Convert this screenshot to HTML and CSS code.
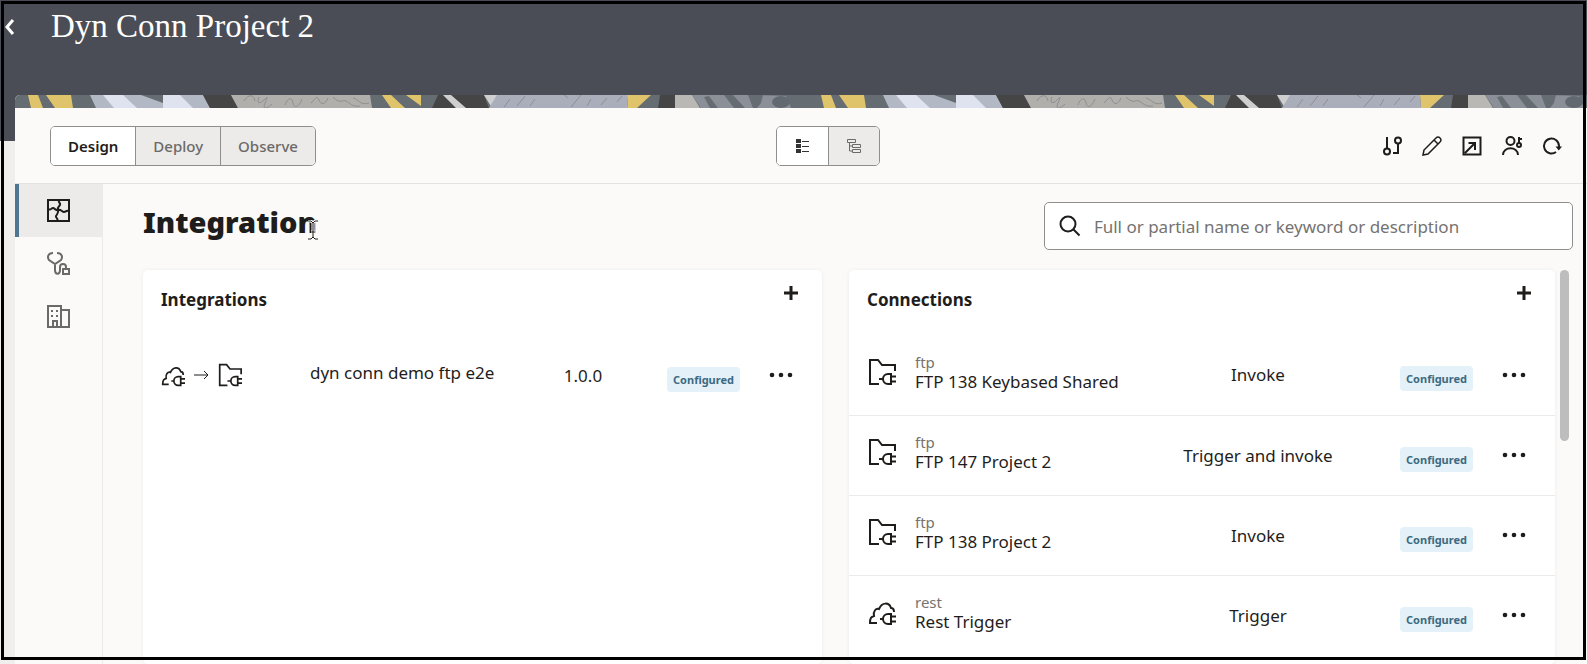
FILE: index.html
```
<!DOCTYPE html>
<html lang="en">
<head>
  <meta charset="UTF-8">
  <title>Dyn Conn Project 2</title>
  <link rel="stylesheet" href="styles.css">
</head>
<body>
  <!-- shared icons -->
  <svg class="defs" width="0" height="0" aria-hidden="true">
    <symbol id="folder-plug" viewBox="0 0 28 28">
      <path d="M11 26H2V2h8l4 5h13v6"/>
      <path d="M11 21h4M23 16h-3a5 5 0 0 0 0 10h3zM23 18.500h5M23 23.500h5"/>
    </symbol>
    <symbol id="cloud-plug" viewBox="0 0 28 28">
      <path d="M9 25H2c0-5 1-6 4-7-1-5 2-8 5-7 3-7 10-7 12-1 2 0 3 2 3 4"/>
      <path d="M12 21h3M23 16h-3a5 5 0 0 0 0 10h3zM23 18.500h5M23 23.500h5"/>
    </symbol>
    <symbol id="plus" viewBox="0 0 14 14">
      <path d="M7 0v14M0 7h14"/>
    </symbol>
    <symbol id="dots" viewBox="0 0 24 6">
      <circle cx="3" cy="3" r="2.300"/><circle cx="12" cy="3" r="2.300"/><circle cx="21" cy="3" r="2.300"/>
    </symbol>
  </svg>

  <header class="header">
    <button class="back" aria-label="Back">
      <svg width="10" height="16" viewBox="0 0 10 16"><path d="M8 1L2 8l6 7"/></svg>
    </button>
    <h1>Dyn Conn Project 2</h1>
  </header>

  <main class="page">
    <svg class="banner" width="100%" height="13" aria-hidden="true">
      <pattern id="strip" width="793" height="13" patternUnits="userSpaceOnUse">
        <rect width="793" height="13" fill="#666d72"/>
        <path fill="#dfc46c" d="M13 0h10l5 13H16zM31 0h25l2 13H40zM367 0h9l14 13h-14zM391 0h15v11zM612 0h24l-14 13h-9z"/>
        <path fill="#b3b8c5" d="M75 0h113l7 13H81z"/>
        <path fill="#dfe3ef" d="M88 0h20l14 13H99zM148 0h17l13 13h-30z"/>
        <path fill="#666d72" d="M126 0h22v8z"/>
        <path fill="#454545" d="M188 0h28l7 13h-28zM423 0h46l5 13h-57zM645 0h15v13h-17z"/>
        <path fill="#b0afac" d="M216 0h139l2 13H223z"/>
        <path class="scribble" d="M229 6c4-7 10-7 11 0M244 2c-3 7 1 7 5 3s4-4 1 3 2 6 7 1M270 10c3-8 7-8 8-2s6 4 9-4M296 8c5-5 6-8 8-3s6 5 9-2M318 2c8 8 9 2 13 4s6 6 14 5M338 3c5 1 8 8 16 5"/>
        <path fill="#cfcfd0" d="M428 0h8l15 13h-10zM469 0h17l-9 13z"/>
        <path fill="#a9aeba" d="M482 0h130l1 13H474z"/>
        <path class="scribble" d="M489 12l6-8M502 11l8-10M515 11l5-7M549 0l4 3M556 12l10-12M572 11l4-7M586 10l6-7M602 7l5-6"/>
        <path fill="#b9b8b5" d="M660 0h17l8 13h-25z"/>
        <path fill="#8b9098" d="M677 0h62l32 1 5 12h-90z"/>
        <path fill="#666d72" d="M689 2l5-1 9 12h-8zM709 0h9l12 13h-11zM733 0h15l-2 8-4 5h-4z"/>
        <ellipse cx="766" cy="7" rx="9" ry="6" fill="#626970"/>
      </pattern>
      <rect width="100%" height="13" fill="url(#strip)"/>
    </svg>

    <div class="toolbar">
      <div class="segmented">
        <button class="active">Design</button>
        <button>Deploy</button>
        <button>Observe</button>
      </div>
      <div class="segmented views">
        <button class="active" aria-label="List view">
          <svg width="14" height="14" viewBox="0 0 14 14">
            <path d="M0 0h5v4H0zM0 5h5v4H0zM0 10h5v4H0z" fill="#333" stroke="none"/>
            <path d="M6 2.500h7M6 7.500h7M6 12.500h7"/>
          </svg>
        </button>
        <button aria-label="Tree view">
          <svg width="16" height="16" viewBox="0 0 16 16">
            <path d="M1.500 1.500h8v3h-8zM6.500 6.500h8v3h-8zM6.500 11.500h8v3h-8zM3.500 5v8h3M3.500 8h3"/>
          </svg>
        </button>
      </div>
      <div class="actions">
        <button aria-label="Branches">
          <svg width="20" height="20" viewBox="0 0 20 20">
            <circle cx="5" cy="15.500" r="3"/><circle cx="16" cy="4.500" r="3"/><path d="M5 1v11M16 8v9h-5"/>
          </svg>
        </button>
        <button aria-label="Edit">
          <svg class="pencil" width="20" height="20" viewBox="0 0 20 20">
            <path d="M1 19l1-5L14 2q2-2 4 0t0 4L6 18zM12 4l4 4"/>
          </svg>
        </button>
        <button aria-label="Open">
          <svg width="20" height="20" viewBox="0 0 20 20">
            <path d="M1.500 1.500h17v17h-17zM3 17L13 7M6.500 7H13v7"/>
          </svg>
        </button>
        <button aria-label="Share">
          <svg width="20" height="20" viewBox="0 0 20 20">
            <circle cx="8.500" cy="5" r="4"/><path d="M1 19c0-9 15-9 15 0M17 1v6M17 3h3"/><circle cx="17" cy="9" r="2"/>
          </svg>
        </button>
        <button aria-label="Refresh">
          <svg width="20" height="20" viewBox="0 0 20 20">
            <path d="M14 16a7.500 7.500 0 1 1 3-6v3"/><path d="M13.500 10.500h6.500l-3.200 4z" fill="#1f1d1b" stroke="none"/>
          </svg>
        </button>
      </div>
    </div>

    <div class="body">
      <nav class="sidebar">
        <a href="#" class="active" aria-label="Integration">
          <svg width="23" height="23" viewBox="0 0 23 23">
            <path d="M1 1h21v21H1z"/>
            <path d="M12 1c-1 3 2 3 1 5s-3 2-2 5M22 12c-3-1-3 1-5 1s-3-3-6-2M10 22c2-3-2-3-1-5s3-3 2-6M1 10c3 2 3-1 5-1s2 3 5 2"/>
          </svg>
        </a>
        <a href="#" aria-label="Health">
          <svg width="23" height="23" viewBox="0 0 23 23">
            <path d="M6 1C1 1 0 5 2 8l6 4 6-4c2-3 1-7-4-7M8 12v6c0 5 5 5 5 0v-3c0-4 6-4 6 0v2M16 17h6v5h-6z"/>
          </svg>
        </a>
        <a href="#" aria-label="Organization">
          <svg width="23" height="23" viewBox="0 0 23 23">
            <path d="M1 1h13v21H1zM14 5h8v17h-8M6 22v-6h4v6"/>
            <path d="M4 6h2M9 6h2M4 11h2M9 11h2"/>
          </svg>
        </a>
      </nav>

      <section class="content">
        <div class="content-head">
          <h2>Integration
            <svg class="ibeam" width="12" height="20" viewBox="0 0 12 20" aria-hidden="true">
              <path class="halo" d="M1 1h3l2 2 2-2h3M6 3v14M1 19h3l2-2 2 2h3M4 12h4"/>
              <path d="M1 1h3l2 2 2-2h3M6 3v14M1 19h3l2-2 2 2h3M4 12h4"/>
            </svg>
          </h2>
          <label class="search">
            <svg width="22" height="22" viewBox="0 0 22 22"><circle cx="9" cy="9" r="7.500"/><path d="M14.500 14.500l6 6"/></svg>
            <input type="text" aria-label="Search" placeholder="Full or partial name or keyword or description">
          </label>
        </div>

        <div class="scroller">
          <div class="panels">
            <section class="panel">
              <div class="panel-head">
                <h3>Integrations</h3>
                <button aria-label="Add integration"><svg class="plus"><use href="#plus"/></svg></button>
              </div>
              <table class="integrations">
                <tr>
                  <td class="flow">
                    <div>
                      <svg class="icon small"><use href="#cloud-plug"/></svg>
                      <svg class="arrow" width="15" height="10" viewBox="0 0 15 10"><path d="M0 5h14M10 1l4 4-4 4"/></svg>
                      <svg class="icon small"><use href="#folder-plug"/></svg>
                    </div>
                  </td>
                  <td class="name">dyn conn demo ftp e2e</td>
                  <td class="type">1.0.0</td>
                  <td class="status"><span class="badge">Configured</span></td>
                  <td class="menu"><button aria-label="Actions"><svg class="dots"><use href="#dots"/></svg></button></td>
                </tr>
              </table>
            </section>

            <section class="panel">
              <div class="panel-head">
                <h3>Connections</h3>
                <button aria-label="Add connection"><svg class="plus"><use href="#plus"/></svg></button>
              </div>
              <table class="connections">
                <tr>
                  <td class="kind"><svg class="icon"><use href="#folder-plug"/></svg></td>
                  <td class="name"><small>ftp</small>FTP 138 Keybased Shared</td>
                  <td class="type">Invoke</td>
                  <td class="status"><span class="badge">Configured</span></td>
                  <td class="menu"><button aria-label="Actions"><svg class="dots"><use href="#dots"/></svg></button></td>
                </tr>
                <tr>
                  <td class="kind"><svg class="icon"><use href="#folder-plug"/></svg></td>
                  <td class="name"><small>ftp</small>FTP 147 Project 2</td>
                  <td class="type">Trigger and invoke</td>
                  <td class="status"><span class="badge">Configured</span></td>
                  <td class="menu"><button aria-label="Actions"><svg class="dots"><use href="#dots"/></svg></button></td>
                </tr>
                <tr>
                  <td class="kind"><svg class="icon"><use href="#folder-plug"/></svg></td>
                  <td class="name"><small>ftp</small>FTP 138 Project 2</td>
                  <td class="type">Invoke</td>
                  <td class="status"><span class="badge">Configured</span></td>
                  <td class="menu"><button aria-label="Actions"><svg class="dots"><use href="#dots"/></svg></button></td>
                </tr>
                <tr>
                  <td class="kind"><svg class="icon"><use href="#cloud-plug"/></svg></td>
                  <td class="name"><small>rest</small>Rest Trigger</td>
                  <td class="type">Trigger</td>
                  <td class="status"><span class="badge">Configured</span></td>
                  <td class="menu"><button aria-label="Actions"><svg class="dots"><use href="#dots"/></svg></button></td>
                </tr>
              </table>
            </section>
          </div>
          <div class="scrollbar"></div>
        </div>
      </section>
    </div>
  </main>
  <div class="frame"></div>
</body>
</html>
```
FILE: styles.css
```
* {
  box-sizing: border-box;
}

body {
  margin: 0;
  height: 100vh;
  overflow: hidden;
  display: flex;
  flex-direction: column;
  background: linear-gradient(#4a4d55 141px, #f0efee 141px);
  color: #1f1d1b;
  font-family: "Noto Sans", "Open Sans", sans-serif;
  font-size: 17px;
}

h1, h2, h3 {
  margin: 0;
}

button {
  padding: 0;
  border: none;
  background: none;
  color: inherit;
  font: inherit;
  cursor: pointer;
}

svg {
  display: block;
  fill: none;
  stroke: #1f1d1b;
  stroke-width: 2;
}

.defs {
  position: absolute;
}

/* black outline round the whole window */
.frame {
  position: absolute;
  top: 1px;
  left: 1px;
  right: 1px;
  bottom: 4px;
  border: 3px solid #000;
  pointer-events: none;
}

/* header */
.header {
  display: flex;
  align-items: center;
  gap: 36px;
  height: 95px;
  padding: 2px 5px 44px;
  color: #fff;
}

.back svg {
  stroke: #fff;
  stroke-width: 3;
}

h1 {
  font-family: Georgia, "Liberation Serif", serif;
  font-size: 33px;
  font-weight: normal;
}

.page {
  flex: 1;
  min-height: 0;
  display: flex;
  flex-direction: column;
  margin-left: 15px;
  background: #fbfaf8;
  border-top-left-radius: 5px;
  overflow: hidden;
}

.banner {
  flex: none;
}

.banner path, .banner rect, .banner ellipse {
  stroke: none;
}

.banner .scribble {
  stroke: #8d8e91;
  stroke-width: 1;
}

/* toolbar */
.toolbar {
  display: grid;
  grid-template-columns: 1.05fr auto 1fr;
  align-items: center;
  height: 76px;
  padding: 0 15px 0 35px;
  border-bottom: 1px solid #e4e3e1;
}

.segmented {
  display: flex;
  justify-self: start;
  border: 1px solid #8f8e8c;
  border-radius: 5px;
  overflow: hidden;
}

.segmented button {
  height: 38px;
  padding: 0 17px;
  background: #ecebea;
  color: #6b6a68;
  font-size: 15px;
  font-weight: 500;
}

.segmented button + button {
  border-left: 1px solid #8f8e8c;
}

.segmented .active {
  background: #fff;
  color: #1f1d1b;
  font-weight: 600;
}

.views button {
  width: 51px;
  display: flex;
  align-items: center;
  justify-content: center;
}

.views svg {
  stroke: #6b6a68;
  stroke-width: 1;
}

.views .active svg {
  stroke: #333;
}

.actions {
  display: flex;
  justify-self: end;
}

.actions button {
  width: 40px;
  height: 40px;
  display: flex;
  align-items: center;
  justify-content: center;
}

.actions .pencil {
  stroke-width: 1.5;
}

/* sidebar */
.body {
  flex: 1;
  min-height: 0;
  display: flex;
}

.sidebar {
  width: 88px;
  border-right: 1px solid #ebeae8;
}

.sidebar a {
  display: flex;
  align-items: center;
  justify-content: center;
  height: 53px;
  padding-right: 5px;
  border-left: 4px solid transparent;
}

.sidebar svg {
  stroke: #6b6a68;
}

.sidebar .active {
  background: #ecebea;
  border-left-color: #4d7690;
}

.sidebar .active svg {
  stroke: #1f1d1b;
}

/* content */
.content {
  flex: 1;
  min-width: 0;
  display: flex;
  flex-direction: column;
  padding: 18px 14px 0 40px;
}

.content-head {
  display: flex;
  align-items: start;
  justify-content: space-between;
}

h2 {
  position: relative;
  font-size: 29px;
  font-weight: 900;
  line-height: 40px;
}

.ibeam {
  position: absolute;
  right: -2px;
  bottom: 2px;
  stroke-width: 1;
}

.ibeam .halo {
  stroke: #fff;
  stroke-width: 3;
}

.search {
  display: flex;
  align-items: center;
  gap: 11px;
  width: 37%;
  height: 48px;
  padding: 0 14px;
  border: 1px solid #8f8e8c;
  border-radius: 5px;
  background: #fff;
}

.search input {
  flex: 1;
  border: none;
  outline: none;
  background: none;
  font: inherit;
  color: inherit;
}

.search input::placeholder {
  color: #757371;
}

.scroller {
  flex: 1;
  min-height: 0;
  display: flex;
  gap: 5px;
  padding: 20px 4px 0 0;
}

.scrollbar {
  width: 9px;
  height: 171px;
  border-radius: 5px;
  background: #bdbdbd;
}

.panels {
  flex: 1;
  display: grid;
  grid-template-columns: 679fr 706fr;
  gap: 27px;
}

.panel {
  background: #fff;
  border-radius: 5px;
  box-shadow: 0 0 4px rgba(0, 0, 0, 0.06);
}

.panel-head {
  display: flex;
  align-items: center;
  justify-content: space-between;
  height: 65px;
  padding: 0 24px 6px 18px;
}

h3 {
  font-size: 17px;
  font-weight: 700;
}

.panel-head button {
  padding-bottom: 14px;
}

.plus {
  width: 14px;
  height: 14px;
  stroke-width: 3;
}

/* rows */
table {
  width: 100%;
  table-layout: fixed;
  border-collapse: collapse;
}

td {
  height: 80px;
  padding: 0;
}

.connections tr + tr td {
  border-top: 1px solid #ebeae8;
}

.flow {
  width: 167px;
}

.flow div {
  display: flex;
  align-items: center;
  gap: 9px;
  padding-left: 18px;
}

.kind {
  width: 66px;
  padding: 0 0 6px 19px;
}

.icon {
  width: 28px;
  height: 28px;
}

.small {
  width: 24px;
  height: 24px;
}

.arrow {
  stroke-width: 1;
}

.name {
  padding-bottom: 4px;
  line-height: 20px;
}

.name small {
  display: block;
  font-size: 15px;
  color: #757371;
}

.connections .name {
  padding-bottom: 6px;
}

.type {
  width: 180px;
  text-align: center;
}

.integrations .type {
  width: 64px;
}

.status {
  width: 125px;
  padding-top: 7px;
  text-align: right;
}

.badge {
  display: inline-block;
  padding: 0 6px;
  border-radius: 4px;
  background: #e4f1f8;
  color: #3c6a82;
  font-size: 11px;
  font-weight: 700;
  line-height: 25px;
}

.menu {
  width: 82px;
}

.menu button {
  display: block;
  margin: 0 auto;
}

.dots {
  width: 24px;
  height: 6px;
  fill: #1f1d1b;
  stroke: none;
}
```
